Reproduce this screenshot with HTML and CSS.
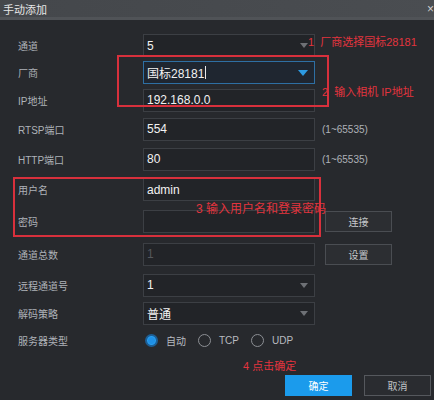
FILE: index.html
```html
<!DOCTYPE html>
<html lang="zh">
<head>
<meta charset="utf-8">
<title>手动添加</title>
<link rel="stylesheet" href="styles.css">
</head>
<body>
<div class="dialog">
  <div class="titlebar">
    <span class="title">手动添加</span>
    <span class="close">×</span>
  </div>
  <div class="form">
    <div class="row h27">
      <span class="label">通道</span>
      <div class="ctl select"><span class="val">5</span><i class="tri"></i></div>
    </div>
    <div class="row h27">
      <span class="label">厂商</span>
      <div class="ctl select active"><span class="val">国标28181<span class="caret"></span></span><i class="tri blue"></i></div>
    </div>
    <div class="row h28">
      <span class="label">IP地址</span>
      <div class="ctl"><span class="val">192.168.0.0</span></div>
    </div>
    <div class="row h30">
      <span class="label">RTSP端口</span>
      <div class="ctl"><span class="val">554</span></div>
      <span class="hint">(1~65535)</span>
    </div>
    <div class="row h30">
      <span class="label">HTTP端口</span>
      <div class="ctl"><span class="val">80</span></div>
      <span class="hint">(1~65535)</span>
    </div>
    <div class="row h31">
      <span class="label">用户名</span>
      <div class="ctl"><span class="val">admin</span></div>
    </div>
    <div class="row h33">
      <span class="label">密码</span>
      <div class="ctl"></div>
      <button class="btn side">连接</button>
    </div>
    <div class="row h32">
      <span class="label">通道总数</span>
      <div class="ctl disabled"><span class="val">1</span></div>
      <button class="btn side">设置</button>
    </div>
    <div class="row h30">
      <span class="label">远程通道号</span>
      <div class="ctl select"><span class="val">1</span><i class="tri"></i></div>
    </div>
    <div class="row h27">
      <span class="label">解码策略</span>
      <div class="ctl select"><span class="val">普通</span><i class="tri"></i></div>
    </div>
    <div class="row h26">
      <span class="label">服务器类型</span>
      <div class="radios">
        <span class="radio on"></span><span class="rlabel">自动</span>
        <span class="radio"></span><span class="rlabel">TCP</span>
        <span class="radio"></span><span class="rlabel">UDP</span>
      </div>
    </div>
  </div>
  <div class="footer">
    <button class="btn primary">确定</button>
    <button class="btn cancel">取消</button>
  </div>

  <div class="mark box1"></div>
  <div class="mark box2"></div>
  <span class="note n1">1&nbsp;&nbsp;厂商选择国标28181</span>
  <span class="note n2">2&nbsp;&nbsp;输入相机 IP地址</span>
  <span class="note n3">3 输入用户名和登录密码</span>
  <span class="note n4">4 点击确定</span>
</div>
</body>
</html>
```
FILE: styles.css
```css
html, body {
  margin: 0;
  padding: 0;
  width: 434px;
  height: 400px;
  overflow: hidden;
  background: #27292d;
  font-family: "Liberation Sans", "Noto Sans CJK SC", sans-serif;
}

.dialog {
  position: relative;
  width: 434px;
  height: 400px;
  display: flex;
  flex-direction: column;
  background: #27292d;
}

.titlebar {
  height: 17px;
  border-bottom: 3px solid #505357;
  background: linear-gradient(90deg, #44474b, #4a4d51);
  display: flex;
  align-items: center;
  justify-content: space-between;
  padding-left: 3px;
}

.title {
  color: #e6e6e6;
  font-size: 11px;
  font-family: "Noto Sans CJK SC", sans-serif;
}

.close {
  color: #d0d0d0;
  font-size: 12px;
  margin-right: 0;
}

.form {
  padding-top: 12px;
  display: flex;
  flex-direction: column;
}

.row {
  display: flex;
  align-items: center;
  padding-left: 18px;
}
.h26 { height: 26px; }
.h27 { height: 27px; }
.h28 { height: 28px; }
.h30 { height: 30px; }
.h31 { height: 31px; }
.h32 { height: 32px; }
.h33 { height: 33px; }

.label {
  width: 125px;
  flex: none;
  color: #aeb2b8;
  font-size: 10px;
  font-family: "Liberation Sans", "Noto Sans CJK SC", sans-serif;
}

.ctl {
  position: relative;
  width: 170px;
  height: 21px;
  flex: none;
  border: 1px solid #3c3f44;
  background: #222428;
  display: flex;
  align-items: center;
}

.ctl.active {
  border-color: #2e6fa3;
  background: #1f2630;
}

.val {
  padding-left: 3px;
  color: #f2f2f2;
  font-size: 12px;
  font-family: "Liberation Sans", "Noto Sans CJK SC", sans-serif;
  display: flex;
  align-items: center;
}

.caret {
  display: inline-block;
  width: 1px;
  height: 13px;
  background: #e8e8e8;
  margin-left: 1px;
}

.disabled .val {
  color: #55585d;
}

.tri {
  position: absolute;
  right: 6px;
  top: 8px;
  width: 0;
  height: 0;
  border-left: 4px solid transparent;
  border-right: 4px solid transparent;
  border-top: 5px solid #6e7176;
}
.tri.blue {
  border-left-width: 5px;
  border-right-width: 5px;
  border-top: 6px solid #2d9be3;
}

.hint {
  margin-left: 7px;
  color: #aeb2b8;
  font-size: 10px;
}

.btn {
  font-family: "Noto Sans CJK SC", sans-serif;
  font-size: 10px;
  padding: 0;
  height: 21px;
  width: 67px;
  border: 1px solid #4a4d52;
  background: #2c2e32;
  color: #c4c6ca;
}

.btn.side {
  margin-left: 10px;
}

.radios {
  display: flex;
  align-items: center;
  margin-left: 2px;
}

.radio {
  box-sizing: border-box;
  width: 13px;
  height: 13px;
  border-radius: 50%;
  border: 1.5px solid #8c8f94;
}
.radio.on {
  border: 2px solid #1c5e95;
  background: #1f90e6;
  box-shadow: inset 0 0 0 1px #2aa2f2;
}

.rlabel {
  color: #b8bbc0;
  font-size: 10px;
  margin-left: 8px;
  margin-right: 12px;
}

.footer {
  margin-top: 22px;
  display: flex;
  justify-content: flex-end;
  gap: 12px;
  padding-right: 3px;
}

.btn.primary {
  background: #1b9bec;
  border-color: #1b9bec;
  color: #ffffff;
}

.btn.cancel {
  border-color: #55585d;
  background: #2a2c30;
  color: #bfc1c5;
}

.mark {
  position: absolute;
  border: 2px solid #d8303c;
  box-sizing: border-box;
}
.box1 {
  left: 117px;
  top: 55px;
  width: 212px;
  height: 52px;
}
.box2 {
  left: 13px;
  top: 177px;
  width: 308px;
  height: 60px;
}

.note {
  position: absolute;
  color: #e3343e;
  font-size: 11px;
  font-family: "Liberation Sans", "Noto Sans CJK SC", sans-serif;
  white-space: nowrap;
  line-height: 14px;
}
.n1 { left: 308px; top: 35px; }
.n2 { left: 322px; top: 85px; }
.n3 { left: 196px; top: 202px; font-size: 12px; }
.n4 { left: 243px; top: 359px; }
```
